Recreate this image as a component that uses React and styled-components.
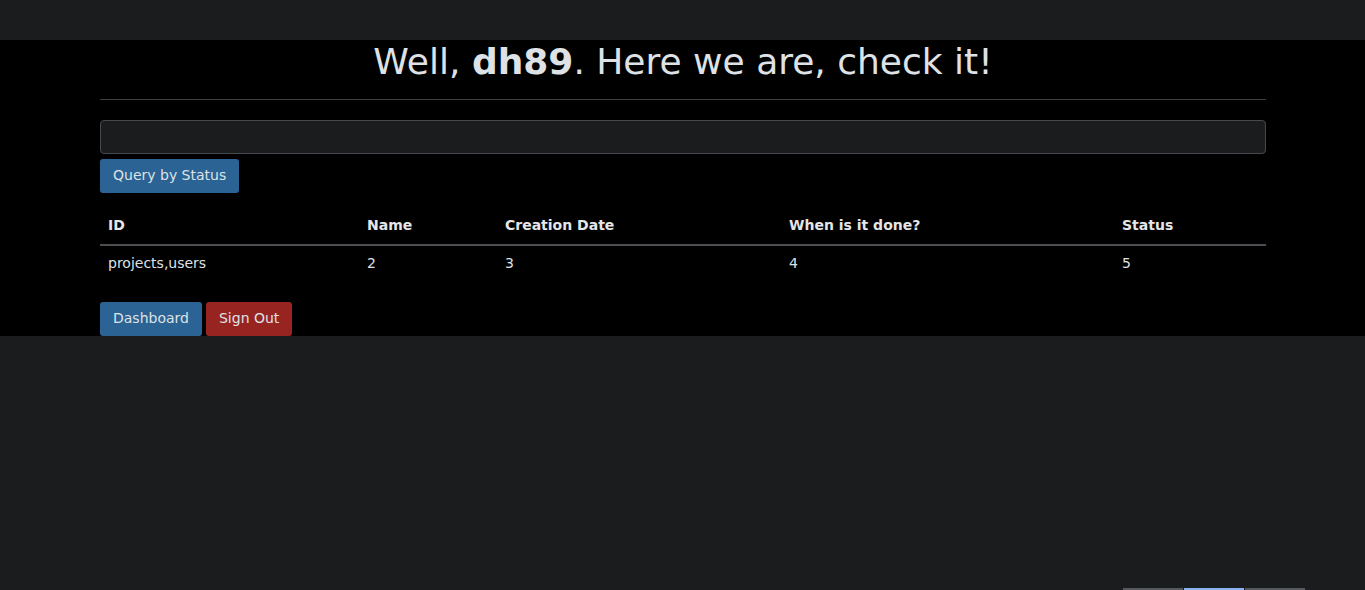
import React, {useState} from 'react';
import styled, {createGlobalStyle} from "styled-components";

const GlobalStyle = createGlobalStyle`
  html, body {
    margin: 0;
    padding: 0;
    background-color: #1b1c1e;
    color: #dee2e6;
    font-family: "DejaVu Sans", "Liberation Sans", sans-serif;
    font-size: 14px;
    overflow: hidden;
  }
  * {
    box-sizing: border-box;
  }
`

const Page = styled.div`
  width: 100%;
  padding-top: 40px;
`

const Main = styled.main`
  background-color: #000;
  padding: 0 99px 0 100px;
`

const Title = styled.h1`
  margin: 0;
  height: 43px;
  font-size: 36px;
  font-weight: 400;
  line-height: 43px;
  text-align: center;
  color: #dee2e6;
`

const Divider = styled.hr`
  margin: 16px 0 0;
  border: none;
  border-top: 1px solid #3d3f42;
`

const Input = styled.input`
  display: block;
  width: 100%;
  height: 34px;
  margin-top: 20px;
  padding: 6px 12px;
  border: 1px solid #46494d;
  border-radius: 4px;
  background-color: #1b1c1e;
  color: #dee2e6;
  font: inherit;
  outline: none;
`

const Button = styled.button`
  height: 34px;
  padding: 0 13px 2px;
  border: none;
  border-radius: 3px;
  background-color: ${({variant}) => variant === 'danger' ? '#982422' : '#2a6394'};
  color: #dee2e6;
  font-family: inherit;
  font-size: 14px;
  cursor: pointer;
`

const QueryRow = styled.div`
  margin-top: 5px;
`

const Table = styled.table`
  width: 100%;
  margin-top: 15px;
  border-collapse: collapse;
  table-layout: fixed;
`

const Th = styled.th`
  width: ${({w}) => w}px;
  height: 37px;
  padding: 0 8px 2px;
  border-bottom: 2px solid #4b4d50;
  text-align: left;
  font-weight: 700;
  color: #e4e6e9;
`

const Td = styled.td`
  height: 37px;
  padding: 0 8px 2px;
  color: #dee2e6;
`

const Actions = styled.div`
  display: flex;
  gap: 4px;
  padding: 20px 0 0;
`

const Pager = styled.div`
  display: flex;
  justify-content: flex-end;
  margin-top: 252px;
  padding-right: 60px;
`

const PagerItem = styled.div`
  width: 60px;
  height: 2px;
  margin-left: 1px;
  background-color: ${({active}) => active ? '#8ab4f0' : '#55585c'};
`

const columns = [
    {label: 'ID', w: 259},
    {label: 'Name', w: 138},
    {label: 'Creation Date', w: 284},
    {label: 'When is it done?', w: 333},
    {label: 'Status', w: 152},
]

const rows = [
    ['projects,users', '2', '3', '4', '5'],
]

const App = () => {
    const [status, setStatus] = useState('')

    return (
        <Page>
            <GlobalStyle/>
            <Main>
                <Title>Well, <b>dh89</b>. Here we are, check it!</Title>
                <Divider/>
                <Input value={status} onChange={e => setStatus(e.target.value)}/>
                <QueryRow>
                    <Button>Query by Status</Button>
                </QueryRow>
                <Table>
                    <thead>
                    <tr>
                        {columns.map(c => <Th key={c.label} w={c.w}>{c.label}</Th>)}
                    </tr>
                    </thead>
                    <tbody>
                    {rows.map((r, i) => (
                        <tr key={i}>
                            {r.map((cell, j) => <Td key={j}>{cell}</Td>)}
                        </tr>
                    ))}
                    </tbody>
                </Table>
                <Actions>
                    <Button>Dashboard</Button>
                    <Button variant="danger">Sign Out</Button>
                </Actions>
            </Main>
            <Pager>
                <PagerItem/>
                <PagerItem active/>
                <PagerItem/>
            </Pager>
        </Page>
    );
};

export default App;
